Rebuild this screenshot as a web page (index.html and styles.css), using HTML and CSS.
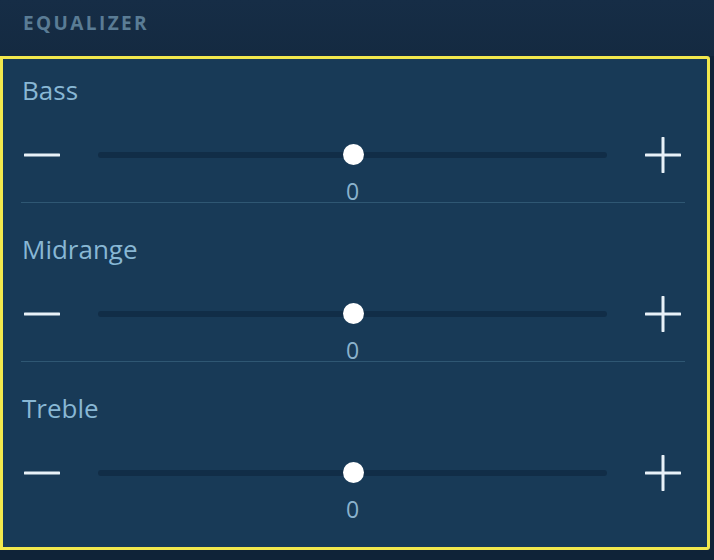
FILE: index.html
```html
<!DOCTYPE html>
<html lang="en">
<head>
<meta charset="utf-8">
<title>Equalizer</title>
<link rel="stylesheet" href="styles.css">
</head>
<body>
<div class="page">
  <header class="header"><h1 class="title">EQUALIZER</h1></header>
  <section class="panel">
    <div class="band">
      <div class="band-label">Bass</div>
      <div class="controls">
        <svg class="btn" viewBox="0 0 36 36"><path d="M1 18 H35" /></svg>
        <div class="track"><span class="thumb"></span></div>
        <svg class="btn" viewBox="0 0 36 36"><path d="M1 18 H35 M18 1 V35" /></svg>
        <div class="value">0</div>
      </div>
    </div>
    <div class="band">
      <div class="band-label">Midrange</div>
      <div class="controls">
        <svg class="btn" viewBox="0 0 36 36"><path d="M1 18 H35" /></svg>
        <div class="track"><span class="thumb"></span></div>
        <svg class="btn" viewBox="0 0 36 36"><path d="M1 18 H35 M18 1 V35" /></svg>
        <div class="value">0</div>
      </div>
    </div>
    <div class="band last">
      <div class="band-label">Treble</div>
      <div class="controls">
        <svg class="btn" viewBox="0 0 36 36"><path d="M1 18 H35" /></svg>
        <div class="track"><span class="thumb"></span></div>
        <svg class="btn" viewBox="0 0 36 36"><path d="M1 18 H35 M18 1 V35" /></svg>
        <div class="value">0</div>
      </div>
    </div>
  </section>
</div>
</body>
</html>
```
FILE: styles.css
```css
* { box-sizing: border-box; }
html, body { margin: 0; padding: 0; }
body {
  background: #0f2338;
  font-family: "Open Sans", Lato, sans-serif;
  width: 714px;
  height: 560px;
  overflow: hidden;
}
.page { width: 714px; }
.header {
  height: 56px;
  background: linear-gradient(#162d46, #142a41);
  padding: 11px 0 0 23px;
}
.title {
  margin: 0;
  font-size: 19px;
  line-height: 24px;
  font-weight: 700;
  letter-spacing: 2.4px;
  color: #5a7c95;
}
.panel {
  width: 710px;
  height: 494px;
  border: 3px solid #f2e84d;
  border-radius: 0 3px 3px 0;
  background: #183a57;
  display: flex;
  flex-direction: column;
}
.band {
  padding: 19px 22px 0 18px;
}
.band + .band { padding-top: 34px; }
.band-label {
  padding-left: 1px;
  font-size: 26px;
  line-height: 24px;
  font-weight: 500;
  color: #88b7d4;
}
.controls {
  margin-top: 33px;
  display: grid;
  grid-template-columns: 36px 1fr 36px;
  grid-template-rows: 40px 27px;
  column-gap: 38px;
  align-items: center;
  padding: 0 4px 0 3px;
  border-bottom: 1px solid #2f5773;
}
.band.last .controls { border-bottom: none; }
.btn {
  width: 36px;
  height: 36px;
  fill: none;
  stroke: #e8f1f8;
  stroke-width: 3;
  stroke-linecap: round;
}
.track {
  position: relative;
  height: 6px;
  border-radius: 3px;
  background: #112d47;
}
.thumb {
  position: absolute;
  left: 50%;
  top: 50%;
  width: 21px;
  height: 21px;
  margin: -11px 0 0 -10px;
  border-radius: 50%;
  background: #ffffff;
}
.value {
  grid-column: 2;
  grid-row: 2;
  text-align: center;
  font-size: 23px;
  line-height: 22px;
  color: #8ab2cd;
  align-self: start;
  margin-top: 5px;
}
```
